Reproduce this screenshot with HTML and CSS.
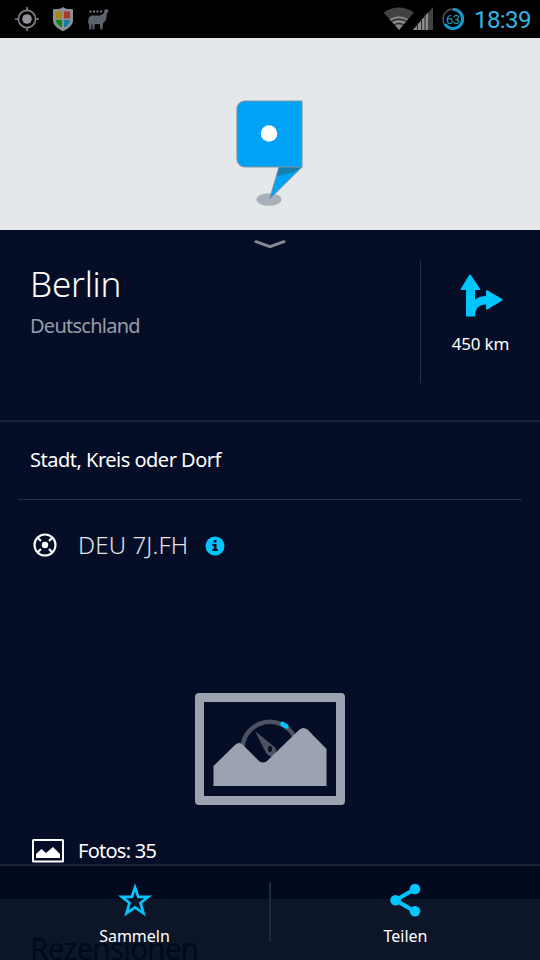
FILE: index.html
```html
<!DOCTYPE html>
<html lang="de">
<head>
<meta charset="utf-8">
<title>Berlin</title>
<link rel="stylesheet" href="styles.css">
</head>
<body>
<div class="phone">
  <header class="status">
    <svg class="status-left" width="120" height="38" viewBox="0 0 120 38">
      <g fill="none" stroke="#85858a" stroke-width="1.6"><circle cx="27" cy="19" r="8.6"/><path d="M27 7v4M27 27v4M15 19h4M35 19h4"/></g>
      <circle cx="27" cy="19" r="4.8" fill="#929297"/>
      <path d="M63 7l3 1.700 7 .5v11c0 5-5 8.500-10 11-5-2.500-10-6-10-11v-11l7-.5z" fill="#8e9095"/>
      <path d="M56 11.500h6V18.500h-6z" fill="#a9860e"/><path d="M64 11.500h6V18.500h-6z" fill="#a9392b"/>
      <path d="M56 20h6v7.500c-3-1.500-6-4-6-7.500z" fill="#078a10"/><path d="M64 20h6c0 3.500-3 6-6 7.500z" fill="#1779a9"/>
      <path d="M105 9l3 .5.700 2.500-1.700 1-1 7-3 3.500-.5 6h-2l-.8-5.500-5 .3-.5 5.200H92.500l-.2-6-1 2 .2 4h-2l-.8-6 .8-3-.8 3-.7-1 .8-5 2.700-2h8.500l3.500-2z" fill="#5d626d"/>
      <path d="M89.500 11.500h13" stroke="#777b83" stroke-width="2" stroke-dasharray="2 1.500"/>
    </svg>
    <div class="status-right">
      <svg width="84" height="38" viewBox="0 0 84 38">
        <path d="M3.500 12.500Q19 2.500 34 12.500L19 30z" fill="#424242"/>
        <path d="M9.500 19Q19 13.500 28 19L19 30z" fill="#85858b"/>
        <path d="M11 21.500Q19 17 27 21.500M14 25Q19 22 24 25" fill="none" stroke="#262629" stroke-width="1.300"/>
        <path d="M33 30L53 7v23z" fill="#424242"/><path d="M33 30L48 12.500V30z" fill="#8b8b90"/>
        <path d="M37.500 23v7M41.500 18v12M45 14v16" stroke="#29292b" stroke-width="1"/>
        <circle cx="73" cy="19" r="10" fill="none" stroke="#505459" stroke-width="1.500"/>
        <path d="M73 9.500A9.500 9.500 0 1 1 65 24" fill="none" stroke="#1597c9" stroke-width="3.200"/>
        <text x="72.800" y="23.500" text-anchor="middle" class="battery">63</text>
      </svg>
      <span class="clock">18:39</span>
    </div>
  </header>

  <section class="map">
    <svg width="90" height="120" viewBox="225 95 90 120">
      <ellipse cx="269" cy="199.500" rx="12.500" ry="6.300" fill="#a7afb8"/>
      <path d="M279 167l-9.500 32L302 167z" fill="#00a2f5" stroke="#84939f" stroke-width="1"/>
      <path d="M279 167h23l-9 5.500-16 3.500z" fill="#177fae"/>
      <path d="M245 101h57v66h-57a8 8 0 0 1-8-8v-50a8 8 0 0 1 8-8z" fill="#00a2f5" stroke="#84939f" stroke-width="1.200"/>
      <circle cx="269" cy="133.500" r="8.300" fill="#fff"/>
    </svg>
  </section>

  <main class="details">
    <svg class="chevron" width="34" height="10" viewBox="0 0 34 10"><path d="M3 2.700l14 5 14-5" fill="none" stroke="#848a93" stroke-width="3" stroke-linecap="round"/></svg>
    <section class="summary">
      <div class="place">
        <h1><span>Berlin</span></h1>
        <p class="country">Deutschland</p>
      </div>
      <div class="route">
        <svg width="44" height="44" viewBox="0 0 44 44" fill="#00c5ff"><path d="M5 16H1.300q-1.300 0-.5-1.300L9 1.300q1-1.600 2-.1l9 13.600q.8 1.200-.8 1.200H15v10q4-4 11-4v-4.500q0-2 1.700-1l14 8.300q1.600 1 0 2l-14 8.500q-1.700 1-1.700-1V30.500q-11 0-11 12H6V16z"/></svg>
        <span class="distance">450 km</span>
      </div>
    </section>
    <section class="category"><span>Stadt, Kreis oder Dorf</span></section>
    <section class="code">
      <svg width="24" height="24" viewBox="0 0 24 24" fill="none" stroke="#fff"><circle cx="12" cy="12" r="10.500" stroke-width="2.100"/><circle cx="12" cy="12" r="3.200" fill="#fff" stroke="none"/><path d="M5 5l3 3M19 5l-3 3M5 19l3-3M19 19l-3-3" stroke-width="2.200"/></svg>
      <span class="code-text">DEU 7J.FH</span>
      <svg class="info" width="20" height="20" viewBox="0 0 20 20"><circle cx="10" cy="10" r="9.500" fill="#00c5ff"/><path d="M8.700 4h2.800v2.600H8.700zM7.300 8h4.200v5h1.300v2H7.300v-2h1.500v-3H7.300z" fill="#060e27"/></svg>
    </section>
    <section class="photos">
      <svg class="placeholder" width="150" height="112" viewBox="0 0 150 112">
        <path fill-rule="evenodd" d="M4 0h142a4 4 0 0 1 4 4v104a4 4 0 0 1-4 4H4a4 4 0 0 1-4-4V4a4 4 0 0 1 4-4zM9 9v94h132V9z" fill="#9ca3b0"/>
        <path d="M47.500 54A27.500 27.500 0 0 1 99 43" fill="none" stroke="#4b5262" stroke-width="4.500"/>
        <path d="M87.500 31l3.800 2.300" stroke="#00c5ff" stroke-width="4.600" stroke-linecap="round"/>
        <path fill-rule="evenodd" d="M60 38l19.500 16q3 3 1 7l-3 3q-5-1-7-5zM75 53a2 3 0 1 0 .1 6 2 3 0 0 0-.1-6z" fill="#4b5262"/>
        <path d="M18.500 93V73L40 52q4-4 8 0l16.500 16.500q3.500 2 7 0L104.500 36.500q4-3 8 0L131.500 56v37z" fill="#9ca3b0"/>
      </svg>
      <div class="photo-row">
        <svg width="32" height="24" viewBox="0 0 32 24"><rect x="1" y="1" width="30" height="21.500" rx=".5" fill="none" stroke="#fff" stroke-width="2"/><path d="M4 19v-4l5.500-5 4.500 4L21 8l7 7v4z" fill="#fff"/></svg>
        <span class="photo-count">Fotos: 35</span>
      </div>
    </section>
  </main>
  <section class="reviews"><h2>Rezensionen</h2></section>

  <nav class="actions">
    <div class="action">
      <svg width="34" height="34" viewBox="0 0 34 34"><path d="M17 4.500l3.200 9.300H30.300l-7.800 6.200 3 10.300L17 24.500 8.500 30.300l3-10.300L3.700 13.800h10.100z" fill="none" stroke="#00c5ff" stroke-width="2.700"/></svg>
      <span class="save">Sammeln</span>
    </div>
    <i class="divider"></i>
    <div class="action">
      <svg class="share-icon" width="34" height="34" viewBox="0 0 34 34" fill="#00c5ff"><path d="M27 6L7.500 17.300 27 28.500" fill="none" stroke="#00c5ff" stroke-width="4"/><circle cx="27" cy="6" r="5.300"/><circle cx="7.500" cy="17.300" r="5.300"/><circle cx="27" cy="28.300" r="5.300"/></svg>
      <span class="share">Teilen</span>
    </div>
  </nav>
</div>
</body>
</html>
```

FILE: styles.css
```css
* { box-sizing: border-box; }
body { margin: 0; font-family: "Noto Sans", sans-serif; color: #fff; background: #060e27; }
h1, h2, p { margin: 0; font-weight: 300; }
svg { display: block; flex: none; }
span { white-space: nowrap; }
.phone { position: relative; width: 540px; height: 960px; overflow: hidden; display: flex; flex-direction: column; background: #060e27; }
.status { height: 38px; flex: none; display: flex; justify-content: space-between; background: #000; }
.status-right { display: flex; width: 160px; }
.battery { font: 13px Roboto, sans-serif; fill: #1d9dcd; letter-spacing: -.5px; }
.clock { margin-left: 10px; font: 24px/40px Roboto, sans-serif; color: #33b5e5; letter-spacing: -.6px; }
.map { height: 192px; flex: none; background: #e4e8eb; padding: 57px 0 0 225px; }
.details { height: 669px; flex: none; }
.chevron { margin: 9px 0 0 253px; }
.summary { height: 173px; display: flex; padding: 11px 0 0 30px; border-bottom: 2px solid #182137; }
.place { width: 390px; }
.place h1 { font-size: 35px; line-height: 48px; letter-spacing: -.2px; }
.country { font-size: 20px; line-height: 28px; margin-top: 4px; font-weight: 400; color: #969ca7; letter-spacing: -.75px; }
.route { width: 120px; height: 123px; border-left: 1px solid #293145; display: flex; flex-direction: column; align-items: center; padding-top: 14px; }
.route svg { margin-left: 3px; }
.distance { font-size: 17px; line-height: 24px; margin-top: 14px; letter-spacing: -.2px; }
.category { height: 78px; margin: 0 18px; padding: 0 12px; border-bottom: 1px solid #293145; font-size: 20px; line-height: 75px; letter-spacing: -.5px; }
.code { height: 90px; padding-left: 33px; display: flex; align-items: center; }
.code-text { margin-left: 21px; font-size: 24px; line-height: 32px; font-weight: 300; color: #e1e3e7; letter-spacing: .15px; }
.info { margin: 2px 0 0 17px; }
.photos { padding-top: 103px; }
.placeholder { margin: 0 auto; }
.photo-row { display: flex; align-items: center; margin: 31px 0 0 32px; height: 30px; }
.photo-count { margin: -2px 0 0 14px; font-size: 20px; letter-spacing: -.75px; }
.reviews { height: 61px; flex: none; background: #fff; padding: 27px 30px 0; color: #060e27; }
.reviews h2 { font-size: 30px; line-height: 46px; font-weight: 400; letter-spacing: -1px; }
.actions { position: absolute; left: 0; right: 0; bottom: 0; height: 96px; display: flex; border-top: 2px solid #182137; background: rgba(0, 9, 28, .95); background-clip: padding-box; }
.action { flex: 1; display: flex; flex-direction: column; align-items: center; padding-top: 17px; font-size: 16px; line-height: 22px; }
.share-icon { margin-right: 2px; }
.action span { margin-top: 8px; }
.divider { width: 2px; height: 60px; margin-top: 16px; background: #202a3b; }
```
